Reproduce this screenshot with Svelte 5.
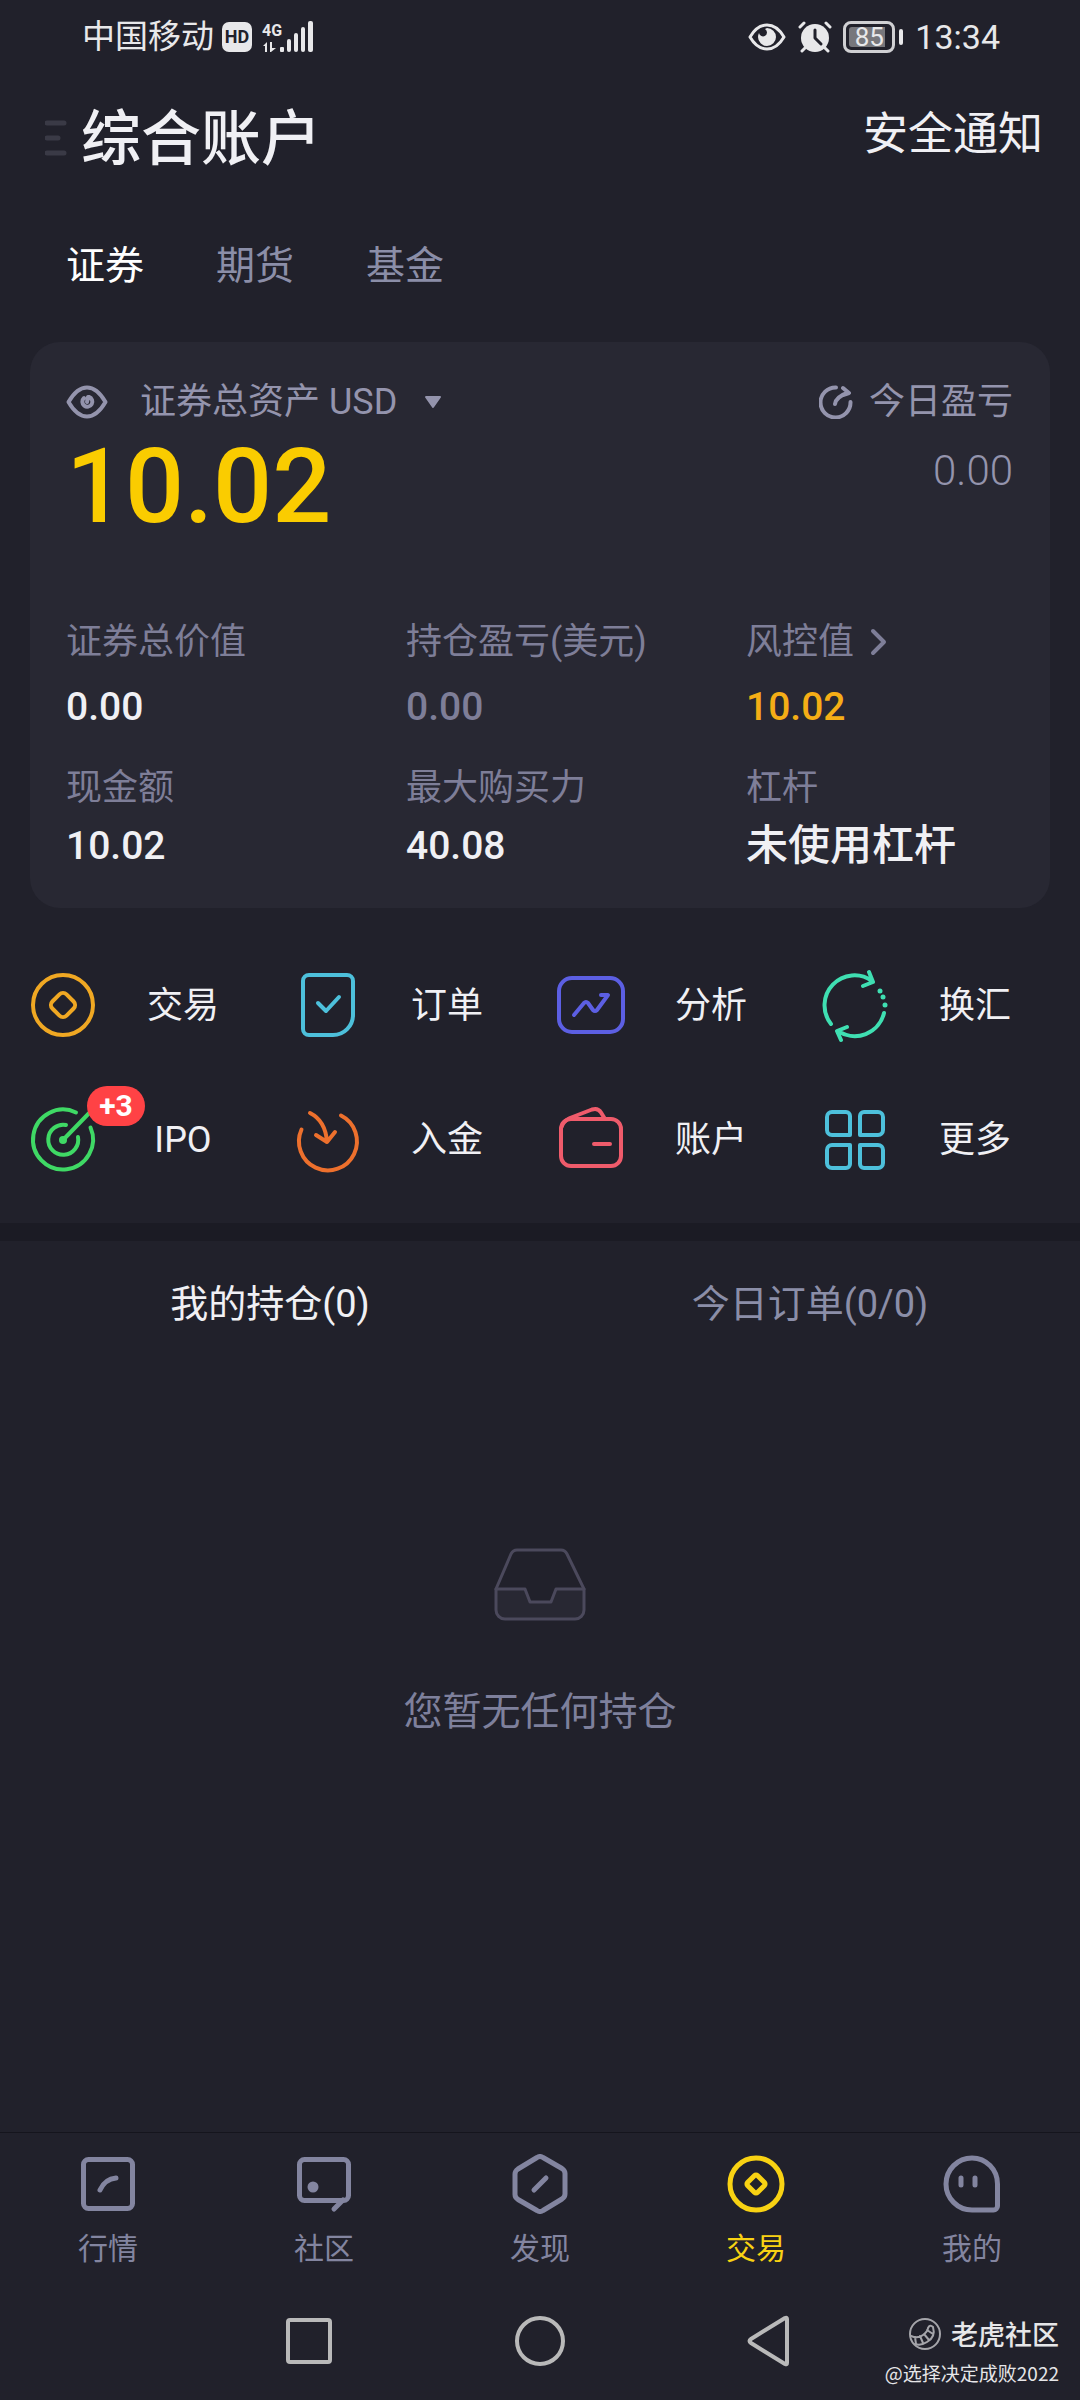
<script lang="ts">
  // account tabs
  const markets = ['证券', '期货', '基金'];
  let market = $state('证券');
  let currency = $state('USD');
  let hidden = $state(false);

  const metrics = [
    [
      { label: '证券总价值', value: '0.00', tone: '' },
      { label: '持仓盈亏(美元)', value: '0.00', tone: 'flat' },
      { label: '风控值', value: '10.02', tone: 'warn', more: true }
    ],
    [
      { label: '现金额', value: '10.02', tone: '' },
      { label: '最大购买力', value: '40.08', tone: '' },
      { label: '杠杆', value: '未使用杠杆', tone: 'text' }
    ]
  ];

  const actions = [
    { id: 'trade', label: '交易' },
    { id: 'orders', label: '订单' },
    { id: 'analysis', label: '分析' },
    { id: 'exchange', label: '换汇' },
    { id: 'ipo', label: 'IPO', badge: '+3' },
    { id: 'deposit', label: '入金' },
    { id: 'wallet', label: '账户' },
    { id: 'more', label: '更多' }
  ];

  const lists = ['我的持仓(0)', '今日订单(0/0)'];
  let list = $state(0);

  const navItems = [
    { id: 'quotes', label: '行情' },
    { id: 'community', label: '社区' },
    { id: 'discover', label: '发现' },
    { id: 'trade', label: '交易' },
    { id: 'mine', label: '我的' }
  ];
  let page = $state('trade');
</script>

{#snippet actionIcon(id: string)}
  <svg class="action-icon {id}" viewBox="0 0 78 78" aria-hidden="true">
    {#if id === 'trade'}
      <circle cx="39" cy="39" r="30" />
      <rect x="29" y="29" width="20" height="20" rx="5" transform="rotate(45 39 39)" />
    {:else if id === 'orders'}
      <path d="M21 9H59a6 6 0 0 1 6 6V49a20 20 0 0 1-20 20H21a6 6 0 0 1-6-6V15a6 6 0 0 1 6-6z" />
      <path d="M30 37l8 8 13-14" />
    {:else if id === 'analysis'}
      <rect x="7" y="12" width="64" height="54" rx="13" />
      <path d="M22 49l10-12q2-2 4 0l5 7q2 2 4 0L56 29H49" />
    {:else if id === 'exchange'}
      <path d="M15 58A30 30 0 0 1 56 15M53 6l4 10-10 4" />
      <path d="M68 47A30 30 0 0 1 22 65M31 61l-10 4 4 9" />
      <g class="dots">
        <circle cx="64" cy="25" r="2.5" />
        <circle cx="67" cy="31" r="2.5" />
        <circle cx="69" cy="39" r="2.5" />
      </g>
    {:else if id === 'ipo'}
      <path d="M52 12.500A30 30 0 1 0 66.500 27.500" />
      <path d="M42 25A15 15 0 1 0 54 37M39 40L71 7" />
      <g class="dots"><circle cx="39" cy="40" r="4" /></g>
    {:else if id === 'deposit'}
      <path d="M13.500 29.500A29 29 0 1 0 53 15.500" />
      <path d="M22 13C32 18 38 28 39 42M28 35l11 7 8-10" />
    {:else if id === 'wallet'}
      <rect x="9" y="19" width="60" height="47" rx="10" />
      <path d="M10 26c1-4 4-6 8-8l22-8.500q6-2 9 3L53 19M42 44H58" />
    {:else}
      <path d="M16 12H30a4 4 0 0 1 4 4V35H16a5 5 0 0 1-5-5V17a5 5 0 0 1 5-5z" />
      <path d="M48 12H62a5 5 0 0 1 5 5V30a5 5 0 0 1-5 5H44V16a4 4 0 0 1 4-4z" />
      <path d="M16 45H34V64a4 4 0 0 1-4 4H16a5 5 0 0 1-5-5V50a5 5 0 0 1 5-5z" />
      <path d="M44 45H62a5 5 0 0 1 5 5V63a5 5 0 0 1-5 5H48a4 4 0 0 1-4-4z" />
    {/if}
  </svg>
{/snippet}

{#snippet navIcon(id: string)}
  <svg class="nav-icon" viewBox="0 0 60 60" aria-hidden="true">
    {#if id === 'quotes'}
      <rect x="5.500" y="5.500" width="49" height="49" rx="5" />
      <path d="M22 36Q27 25 38 24" />
    {:else if id === 'community'}
      <rect x="5.500" y="5.500" width="49" height="41" rx="5" />
      <path d="M49 46l-9 9" />
      <circle class="solid" cx="19" cy="33" r="5.500" />
    {:else if id === 'discover'}
      <path d="M27 3.500q3-2 6 0L52 14.500q3 2 3 5V40q0 3-3 5L33 56.500q-3 2-6 0L8 45.500q-3-2-3-5V20q0-3 3-5z" />
      <path d="M24 36l12-12" />
    {:else if id === 'trade'}
      <circle cx="30" cy="30" r="26" />
      <rect x="23" y="23" width="14" height="14" rx="2" transform="rotate(45 30 30)" />
    {:else}
      <path d="M30 4A25.500 26 0 0 1 55.500 30V52a4 4 0 0 1-4 4H30A26 26 0 0 1 30 4z" />
      <path d="M19 24v7M33 24v7" />
    {/if}
  </svg>
{/snippet}

<div class="screen">
  <div class="status-bar">
    <span class="carrier">中国移动</span>
    <span class="hd">HD</span>
    <svg class="signal" viewBox="0 0 52 32" aria-hidden="true">
      <text x="0" y="15">4G</text>
      <path d="M1 25l4-4v10h-2v-6zM8 21h2v6h4l-5 4h-1z" />
      <rect x="18" y="26" width="4" height="5" rx="1" />
      <rect x="25" y="18" width="4" height="13" rx="2" />
      <rect x="32" y="12" width="4" height="19" rx="2" />
      <rect x="39" y="6" width="4" height="25" rx="2" />
      <rect x="46" y="0" width="5" height="31" rx="2" />
    </svg>
    <svg class="eye-care" viewBox="0 0 38 28" aria-hidden="true">
      <path class="line" d="M2 14Q9 2 19 2T36 14Q29 26 19 26T2 14z" />
      <path d="M19 5a9 9 0 1 1-9 9q0-2 1-4a4 4 0 1 0 6-4z" />
    </svg>
    <svg class="alarm" viewBox="0 0 34 32" aria-hidden="true">
      <circle cx="17" cy="17" r="14" />
      <path class="line" d="M2 6l4-4M28 2l4 4M7 27l-3 3M27 27l3 3" />
      <path class="hands" d="M17 9v8l6 6" />
    </svg>
    <span class="battery"><span class="level">85</span></span>
    <span class="clock">13:34</span>
  </div>

  <header>
    <button class="menu" aria-label="菜单">
      <svg viewBox="0 0 22 36" aria-hidden="true">
        <path d="M2 3H19M2 18H13M2 33H19" />
      </svg>
    </button>
    <h1>综合账户</h1>
    <a class="notice" href="#notice">安全通知</a>
  </header>

  <div class="markets">
    {#each markets as m}
      <button class:active={market === m} onclick={() => (market = m)}>{m}</button>
    {/each}
  </div>

  <section class="card">
    <div class="summary">
      <div>
        <div class="line-row">
          <button class="toggle-eye" aria-label="隐藏金额" onclick={() => (hidden = !hidden)}>
            <svg viewBox="0 0 42 34" aria-hidden="true">
              <path d="M2.500 17Q11 2.500 21 2.500T39.500 17Q31 31.500 21 31.500T2.500 17z" />
              <path d="M23 12A5 5 0 1 1 18 13M22 12l-1 5" />
            </svg>
          </button>
          <label for="currency">证券总资产</label>
          <select id="currency" bind:value={currency}>
            <option>USD</option>
          </select>
          <svg class="caret" viewBox="0 0 18 14" aria-hidden="true">
            <path d="M2 2H16L9 12z" />
          </svg>
        </div>
        <p class="total">{hidden ? '****' : '10.02'}</p>
      </div>
      <div class="today">
        <div class="line-row">
          <svg class="refresh" viewBox="0 0 34 34" aria-hidden="true">
            <path d="M17 2.500A15 15 0 1 0 31.500 17M16 19q1-7 12-11M24 3l6 5-6 2" />
          </svg>
          <span>今日盈亏</span>
        </div>
        <p>0.00</p>
      </div>
    </div>

    {#each metrics as row}
      <dl class="metrics">
        {#each row as item}
          <div>
            <dt>
              {item.label}
              {#if item.more}
                <svg class="chevron" viewBox="0 0 18 28" aria-hidden="true">
                  <path d="M3 3l11 11L3 25" />
                </svg>
              {/if}
            </dt>
            <dd class={item.tone}>{item.value}</dd>
          </div>
        {/each}
      </dl>
    {/each}
  </section>

  <section class="actions">
    {#each actions as action}
      <button>
        {@render actionIcon(action.id)}
        <span class="action-label">{action.label}</span>
        {#if action.badge}
          <span class="badge">{action.badge}</span>
        {/if}
      </button>
    {/each}
  </section>

  <div class="lists">
    {#each lists as name, i}
      <button class:active={list === i} onclick={() => (list = i)}>{name}</button>
    {/each}
  </div>

  <div class="empty">
    <svg viewBox="0 0 92 74" aria-hidden="true">
      <path class="tray" d="M2 41H31l5 13H57l5-13H90V62a9 9 0 0 1-9 9H11a9 9 0 0 1-9-9z" />
      <path d="M2 41L17 6q2-4 6-4H67q4 0 6 4L90 41" />
    </svg>
    <p>您暂无任何持仓</p>
  </div>

  <nav class="tab-bar">
    {#each navItems as item}
      <button class:active={page === item.id} onclick={() => (page = item.id)}>
        {@render navIcon(item.id)}
        <span>{item.label}</span>
      </button>
    {/each}
  </nav>

  <div class="system-bar">
    <button aria-label="最近任务">
      <svg viewBox="0 0 60 60" aria-hidden="true"><rect x="8" y="9" width="42" height="42" rx="2" /></svg>
    </button>
    <button aria-label="主页">
      <svg viewBox="0 0 60 60" aria-hidden="true"><circle cx="30" cy="30" r="23" /></svg>
    </button>
    <button aria-label="返回">
      <svg viewBox="0 0 60 60" aria-hidden="true"><path d="M47 8V52q0 2-2 1L11 32q-3-2 0-4L45 7q2-1 2 1z" /></svg>
    </button>
    <div class="watermark">
      <div class="brand">
        <svg viewBox="0 0 32 32" aria-hidden="true">
          <circle cx="16" cy="16" r="15" />
          <path d="M2 18q7 3 12-1t5-7q2-4 5-1 3 10-6 15-6 4-12 2M6 19l1 7M11 18l3 7M15 16l5 6M18 12l6 4" />
        </svg>
        <span>老虎社区</span>
      </div>
      <span class="author">@选择决定成败2022</span>
    </div>
  </div>
</div>

<style>
  :global(body) {
    background: #21212b;
  }
  .screen {
    display: flex;
    flex-direction: column;
    min-height: 100vh;
    background: #21212b;
    color: #f0f0f4;
    font-family: Roboto, 'Noto Sans CJK SC', sans-serif;
    font-size: 36px;
    line-height: 48px;
  }
  h1, p, dl, dd {
    margin: 0;
  }
  button, select {
    padding: 0;
    border: none;
    background: none;
    color: inherit;
    font: inherit;
    cursor: pointer;
  }
  svg {
    display: block;
    flex: none;
    fill: none;
    stroke: currentColor;
    stroke-linecap: round;
    stroke-linejoin: round;
  }

  /* status bar */
  .status-bar {
    display: flex;
    align-items: center;
    height: 74px;
    padding: 0 80px 0 82px;
    color: #e8e8ea;
  }
  .status-bar svg {
    fill: currentColor;
    stroke: none;
  }
  .carrier {
    font-size: 33px;
  }
  .hd {
    width: 30px;
    margin: 0 10px 0 8px;
    border-radius: 7px;
    background: #e8e8ea;
    color: #21212b;
    font-size: 18px;
    font-weight: 700;
    line-height: 30px;
    text-align: center;
  }
  .signal {
    width: 52px;
    height: 32px;
    margin-right: auto;
    font-size: 16px;
    font-weight: 700;
  }
  .eye-care {
    width: 38px;
    height: 28px;
    margin-right: 12px;
  }
  .alarm {
    width: 34px;
    height: 32px;
    margin-right: 11px;
  }
  .status-bar .line {
    fill: none;
    stroke: currentColor;
    stroke-width: 3;
  }
  .status-bar .hands {
    fill: none;
    stroke: #21212b;
    stroke-width: 3;
  }
  .battery {
    position: relative;
    padding: 3px;
    margin-right: 20px;
    border: 3px solid #d0d0d3;
    border-radius: 8px;
  }
  .battery::after {
    content: '';
    position: absolute;
    top: 5px;
    right: -11px;
    width: 4px;
    height: 16px;
    border-radius: 2px;
    background: #e8e8ea;
  }
  .level {
    display: block;
    width: 40px;
    border-radius: 3px;
    background: linear-gradient(90deg, #77777c 36px, transparent 36px);
    font-size: 26px;
    line-height: 20px;
    text-align: center;
  }
  .clock {
    font-size: 34px;
  }

  header {
    display: flex;
    align-items: center;
    height: 128px;
    padding: 0 37px 0 45px;
  }
  .menu {
    margin-right: 14px;
    color: #3a3a46;
  }
  .menu svg {
    width: 22px;
    height: 36px;
    stroke-width: 5;
  }
  h1 {
    padding-top: 4px;
    font-size: 60px;
    font-weight: 500;
    line-height: 80px;
  }
  .notice {
    margin-left: auto;
    padding-bottom: 6px;
    color: inherit;
    font-size: 45px;
    text-decoration: none;
  }

  .markets {
    display: flex;
    gap: 72px;
    height: 126px;
    padding: 2px 66px 0;
    box-sizing: border-box;
    color: #8b8ea8;
    font-size: 39px;
  }
  .markets .active {
    color: #fff;
  }

  /* asset card */
  .card {
    margin: 14px 30px 0;
    padding: 36px 37px 38px 36px;
    border-radius: 30px;
    background: #282833;
  }
  .summary {
    display: flex;
    justify-content: space-between;
    margin-bottom: 81px;
    color: #9494ad;
  }
  .line-row {
    display: flex;
    align-items: center;
  }
  .toggle-eye {
    margin-right: 32px;
  }
  .toggle-eye svg {
    width: 42px;
    height: 34px;
    stroke-width: 4;
  }
  select {
    margin-left: 9px;
    appearance: none;
  }
  option {
    color: #21212b;
  }
  .caret {
    width: 18px;
    height: 14px;
    margin-left: 26px;
    fill: currentColor;
    stroke-width: 2;
  }
  .total {
    margin-top: 11px;
    color: #facc00;
    font-size: 104px;
    font-weight: 500;
    line-height: 100px;
  }
  .today {
    text-align: right;
  }
  .refresh {
    width: 34px;
    height: 34px;
    margin-right: 16px;
    stroke-width: 4;
  }
  .today p {
    margin-top: 21px;
    font-size: 42px;
    font-weight: 300;
  }
  .metrics {
    display: grid;
    grid-template-columns: 1fr 1fr 267px;
  }
  .metrics + .metrics {
    margin-top: 33px;
  }
  dt {
    display: flex;
    align-items: center;
    gap: 16px;
    color: #7e7e98;
  }
  dd {
    margin-top: 17px;
    font-size: 39px;
    font-weight: 500;
  }
  .metrics + .metrics dd {
    margin-top: 10px;
  }
  dd.flat {
    color: #7e7e98;
  }
  dd.warn {
    color: #f5ae16;
  }
  dd.text {
    font-size: 42px;
  }
  .chevron {
    width: 18px;
    height: 28px;
    stroke-width: 4;
  }

  /* shortcuts */
  .actions {
    display: grid;
    grid-template-columns: repeat(4, 1fr);
    padding: 30px 0 17px 24px;
    border-bottom: 18px solid #1b1b24;
  }
  .actions button {
    position: relative;
    display: flex;
    align-items: center;
    gap: 45px;
    height: 134px;
  }
  .action-icon {
    width: 78px;
    height: 78px;
    stroke-width: 4;
  }
  .action-label {
    min-width: 72px;
    padding-top: 2px;
    text-align: center;
  }
  .dots {
    fill: currentColor;
    stroke: none;
  }
  .trade { color: #f0a823; }
  .orders, .more { color: #4dc0db; }
  .analysis { color: #5c5fe3; }
  .exchange { color: #3fdfb2; }
  .ipo { color: #3fd965; }
  .deposit { color: #ed702d; }
  .wallet { color: #ef5b6b; }
  .badge {
    position: absolute;
    top: 14px;
    left: 63px;
    width: 58px;
    border-radius: 20px;
    background: #ff4245;
    color: #fff;
    font-size: 30px;
    font-weight: 700;
    line-height: 40px;
    text-align: center;
  }

  .lists {
    display: grid;
    grid-template-columns: 1fr 1fr;
    height: 126px;
    color: #8b8ea8;
    font-size: 38px;
  }
  .lists .active {
    color: #f0f0f4;
  }

  .empty {
    display: flex;
    flex: 1;
    flex-direction: column;
    align-items: center;
    gap: 66px;
    padding-top: 181px;
    color: #7e809c;
    font-size: 39px;
  }
  .empty svg {
    width: 92px;
    height: 74px;
    color: #4b495c;
    stroke-width: 3;
  }
  .empty .tray {
    fill: #282833;
  }

  .tab-bar {
    display: grid;
    grid-template-columns: repeat(5, 1fr);
    padding: 21px 0 13px;
    border-top: 1px solid #15151d;
    color: #8385a0;
    font-size: 30px;
    line-height: 40px;
  }
  .tab-bar button {
    display: flex;
    flex-direction: column;
    align-items: center;
    gap: 15px;
  }
  .tab-bar .active {
    color: #f8d213;
  }
  .nav-icon {
    width: 60px;
    height: 60px;
    stroke-width: 5;
  }
  .solid {
    fill: currentColor;
    stroke: none;
  }

  .system-bar {
    position: relative;
    display: flex;
    justify-content: center;
    gap: 170px;
    height: 118px;
    color: #b9b9b9;
  }
  .system-bar button svg {
    width: 60px;
    height: 60px;
    stroke-width: 4;
  }
  .watermark {
    position: absolute;
    right: 21px;
    bottom: 12px;
    display: flex;
    flex-direction: column;
    align-items: flex-end;
    color: #e6e6e8;
    font-family: 'Noto Sans CJK SC', sans-serif;
  }
  .brand {
    display: flex;
    align-items: center;
    gap: 10px;
    font-size: 27px;
    font-weight: 500;
    line-height: 48px;
  }
  .brand svg {
    width: 32px;
    height: 32px;
    color: #a5a5aa;
    stroke-width: 2;
  }
  .author {
    font-size: 19px;
    line-height: 30px;
  }
</style>
